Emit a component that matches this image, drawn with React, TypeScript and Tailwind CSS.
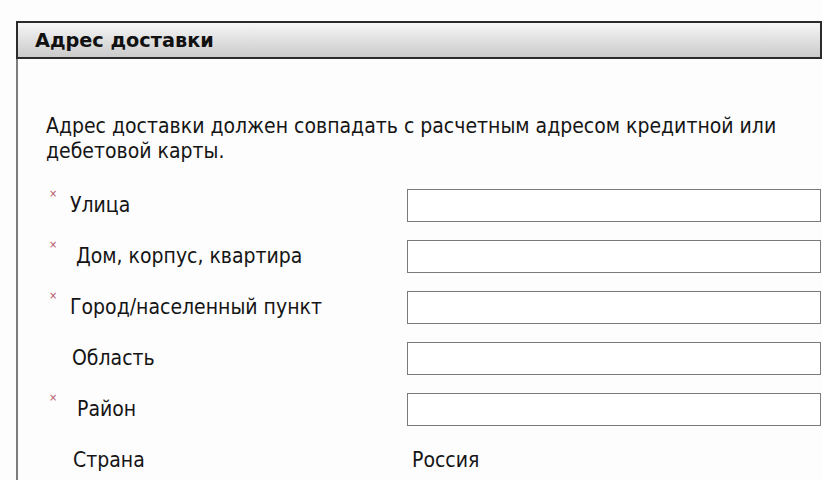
import React from 'react';

type Field = { label: string; required: boolean; input: boolean; pad: string };

const fields: Field[] = [
  { label: 'Улица', required: true, input: true, pad: 'pl-[24px]' },
  { label: 'Дом, корпус, квартира', required: true, input: true, pad: 'pl-[30px]' },
  { label: 'Город/населенный пункт', required: true, input: true, pad: 'pl-[24px]' },
  { label: 'Область', required: false, input: true, pad: 'pl-[26px]' },
  { label: 'Район', required: true, input: true, pad: 'pl-[31px]' },
  { label: 'Страна', required: false, input: false, pad: 'pl-[27px]' },
];

const App: React.FC = () => {
  return (
    <div
      className="w-[822px] h-[480px] overflow-hidden bg-[#fdfdfd] pt-[21px] pl-[16px] text-[#111]"
      style={{ fontFamily: '"DejaVu Sans Condensed", "DejaVu Sans", Verdana, sans-serif' }}
    >
      <div className="border-l-2 border-[#7d7d7d] h-full">
        {/* Header */}
        <div className="-ml-[2px] h-[38px] border-2 border-[#2b2b2b] bg-gradient-to-b from-[#f6f6f6] to-[#cbcbcb] flex items-center pl-[17px] pt-[3px]">
          <span className="text-[19.3px] font-bold" style={{ fontFamily: '"DejaVu Sans", sans-serif' }}>
            Адрес доставки
          </span>
        </div>

        {/* Body */}
        <div className="pl-[28px] pt-[55px] font-stretch-condensed text-[#151515]">
          <p className="text-[21px] leading-[25px] w-[760px]">
            Адрес доставки должен совпадать с расчетным адресом кредитной или дебетовой карты.
          </p>

          <div className="mt-[25px] flex flex-col gap-[18px]">
            {fields.map((f) => (
              <div key={f.label} className="relative flex items-center h-[33px]">
                {f.required && (
                  <span className="absolute left-[3px] -top-[1px] text-[11px] leading-none text-[#b05565]">×</span>
                )}
                <div className={`w-[361px] text-[21px] ${f.pad}`}>{f.label}</div>
                {f.input ? (
                  <div className="w-[414px] h-[33px] border border-[#7a7a7a] bg-white" />
                ) : (
                  <div className="pl-[5px] text-[21px]">Россия</div>
                )}
              </div>
            ))}
          </div>
        </div>
      </div>
    </div>
  );
};

export default App;
